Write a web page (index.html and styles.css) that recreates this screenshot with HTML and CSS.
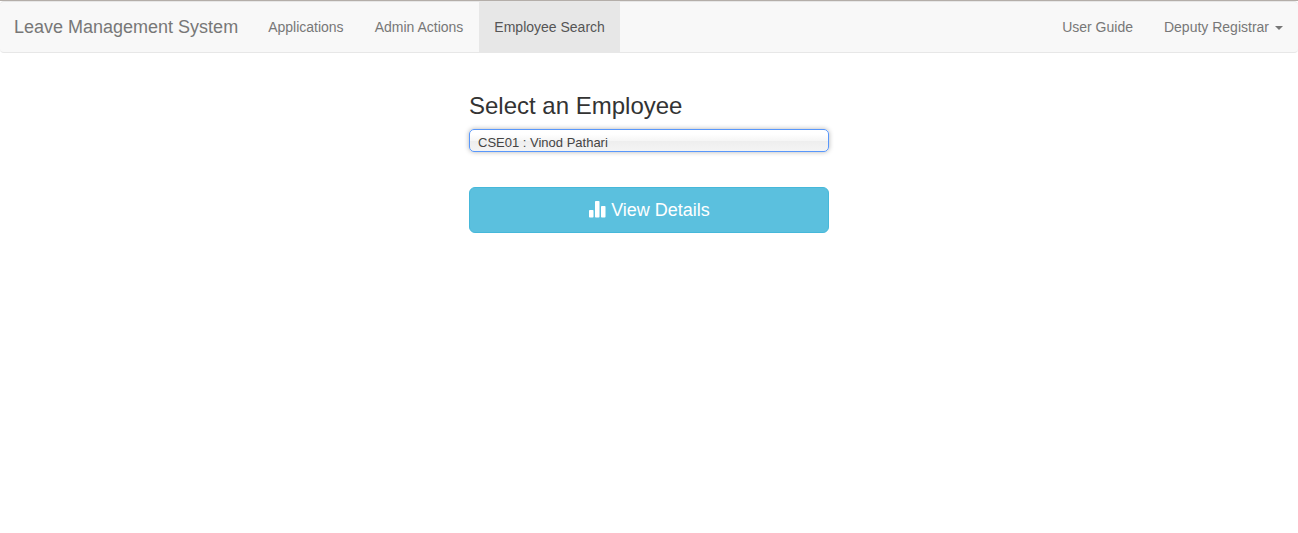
FILE: index.html
```html
<!DOCTYPE html>
<html lang="en">
<head>
<meta charset="utf-8">
<meta name="viewport" content="width=device-width, initial-scale=1">
<title>Leave Management System</title>
<link rel="stylesheet" href="styles.css">
</head>
<body>
<nav class="navbar">
  <a class="brand" href="#">Leave Management System</a>
  <ul class="nav">
    <li><a class="nav-link" href="#">Applications</a></li>
    <li><a class="nav-link" href="#">Admin Actions</a></li>
    <li><a class="nav-link active" href="#" aria-current="page">Employee Search</a></li>
  </ul>
  <ul class="nav nav-right">
    <li><a class="nav-link" href="#">User Guide</a></li>
    <li><button class="nav-link" type="button" aria-haspopup="true">Deputy Registrar<span class="caret"></span></button></li>
  </ul>
</nav>
<main>
  <form class="search">
    <label class="title" for="employee">Select an Employee</label>
    <select class="picker" id="employee">
      <option>CSE01 : Vinod Pathari</option>
    </select>
    <button class="submit" type="button">
      <svg class="icon" viewBox="0 0 18 18" aria-hidden="true"><rect x="1" y="9" width="4.500" height="7.500" rx="0.800"/><rect x="7" y="0" width="4.500" height="16.500" rx="0.800"/><rect x="13" y="5" width="4.500" height="11.500" rx="0.800"/></svg>
      View Details
    </button>
  </form>
</main>
</body>
</html>
```
FILE: styles.css
```css
* {
  box-sizing: border-box;
}

body {
  margin: 0;
  border-top: 1px solid #b4aea9;
  background: #fff;
  color: #333;
  font: 14px/20px "Liberation Sans", Arial, sans-serif;
}

a {
  text-decoration: none;
}

.navbar {
  display: flex;
  border: 1px solid #e7e7e7;
  border-width: 1px 0;
  border-radius: 4px;
  background: #f8f8f8;
}

.brand {
  padding: 15px 15px 15px 14px;
  color: #777;
  font-size: 18px;
}

.nav {
  display: flex;
  gap: 1px;
  margin: 0;
  padding: 0;
  list-style: none;
}

.nav-right {
  margin-left: auto;
}

.nav-link {
  display: block;
  padding: 15px;
  border: 0;
  background: transparent;
  color: #777;
  font: inherit;
}

.nav-link.active {
  background: #e7e7e7;
  color: #555;
}

.caret {
  display: inline-block;
  margin-left: 6px;
  border: 4px solid transparent;
  border-top-color: #777;
  border-bottom: 0;
  vertical-align: middle;
}

.search {
  display: flex;
  flex-direction: column;
  width: 100%;
  max-width: 360px;
  margin: 40px auto;
}

.title {
  margin-bottom: 10px;
  font-size: 24px;
  line-height: 26px;
}

.picker {
  appearance: none;
  height: 23px;
  margin-bottom: 35px;
  padding: 4px 8px 0;
  border: 1px solid #5897fb;
  border-radius: 5px;
  outline: 0;
  background: linear-gradient(#fff 20%, #f6f6f6 50%, #eee 52%, #f4f4f4);
  box-shadow: 0 0 5px rgba(0, 0, 0, 0.3);
  color: #444;
  font: 13px "Liberation Sans", Arial, sans-serif;
}

.submit {
  display: flex;
  align-items: center;
  justify-content: center;
  gap: 5px;
  padding: 10px 16px;
  border: 1px solid #46b8da;
  border-radius: 6px;
  background: #5bc0de;
  color: #fff;
  font: 18px/24px "Liberation Sans", Arial, sans-serif;
}

.icon {
  width: 18px;
  height: 18px;
  fill: currentColor;
}
```
